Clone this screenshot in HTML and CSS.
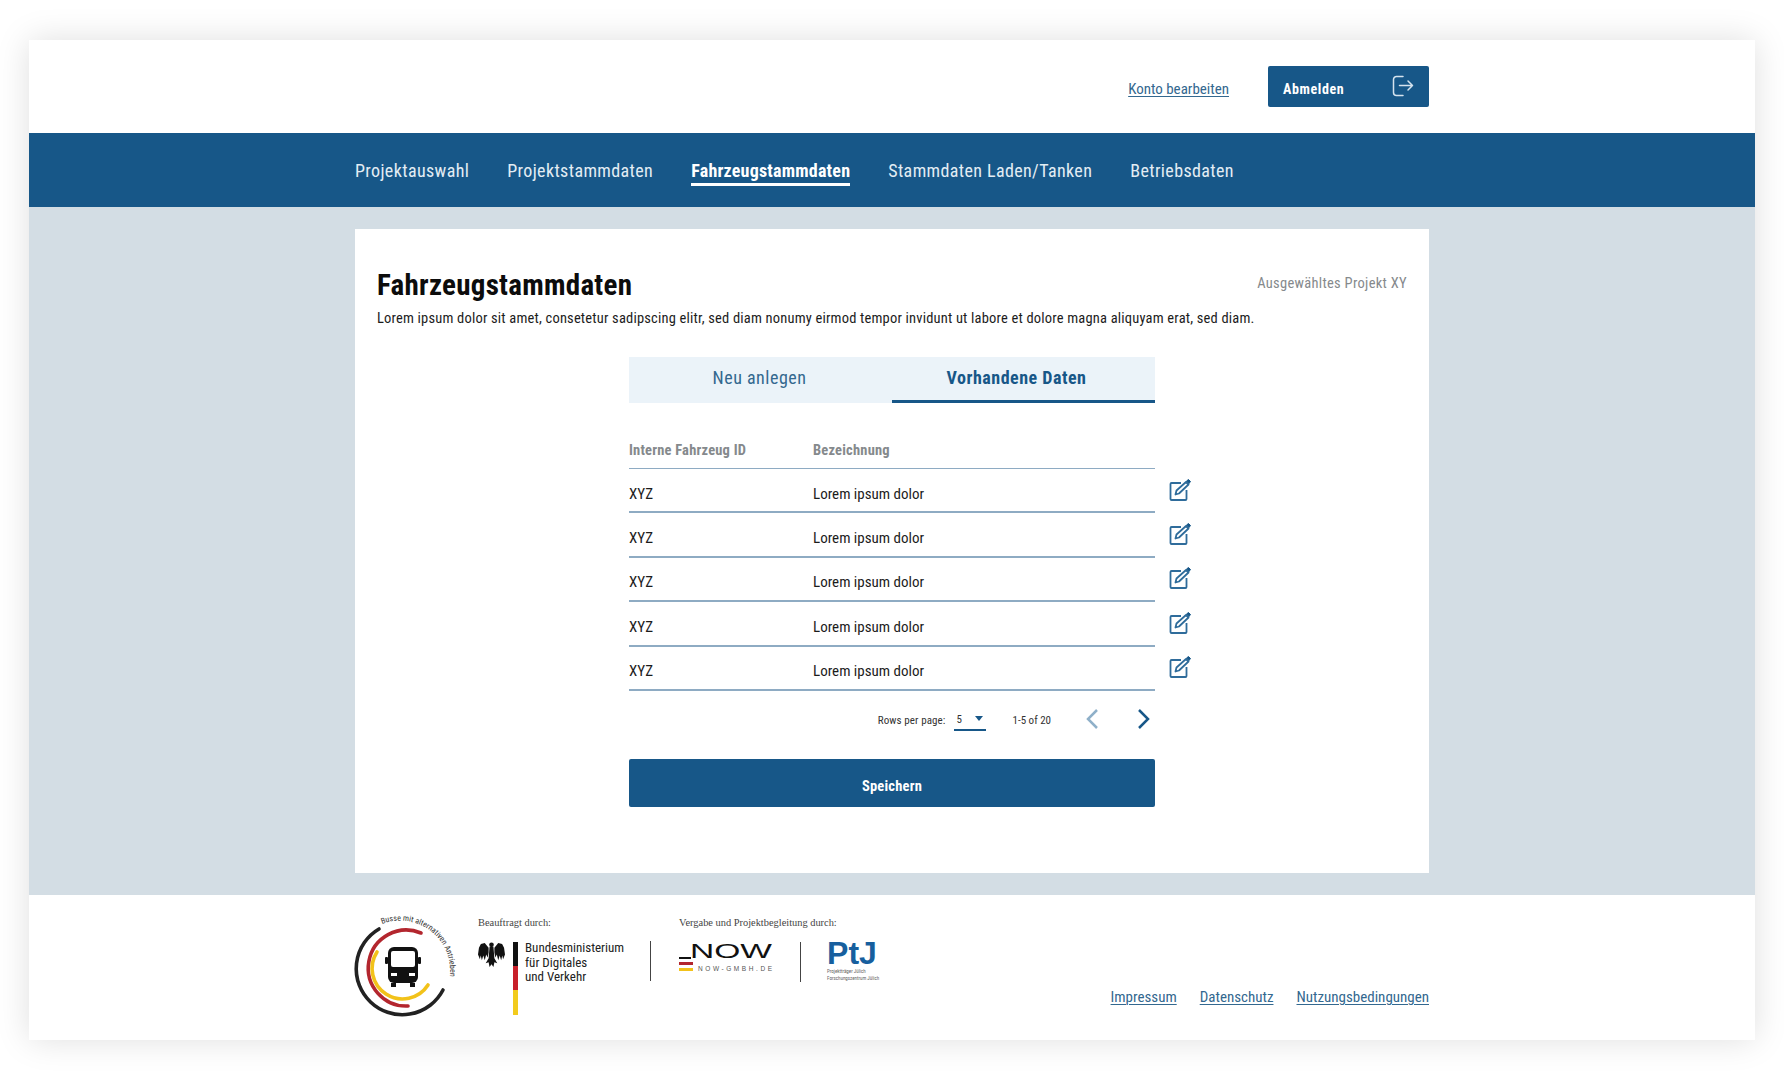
FILE: index.html
```html
<!DOCTYPE html>
<html lang="de">
<head>
    <meta charset="UTF-8">
    <meta name="viewport" content="width=device-width, initial-scale=1.0">
    <title>Fahrzeugstammdaten</title>
    <link rel="stylesheet" href="styles.css">
</head>
<body>
    <div class="frame">
        <header class="topbar">
            <div class="container topbar-inner">
                <a class="link account-link" href="#">Konto bearbeiten</a>
                <button class="logout-btn" type="button">
                    <span class="logout-text">Abmelden</span>
                    <svg class="logout-icon" viewBox="0 0 22 22" fill="none" stroke="#d5e3ee" stroke-width="1.5" stroke-linecap="round" stroke-linejoin="round">
                        <path d="M11 1.500H4.500a3 3 0 0 0-3 3v13a3 3 0 0 0 3 3H11"/>
                        <path d="M7.500 10.500h13M16 6l4.500 4.500L16 15"/>
                    </svg>
                </button>
            </div>
        </header>

        <nav class="mainnav">
            <div class="container mainnav-inner">
                <a class="nav-item" href="#">Projektauswahl</a>
                <a class="nav-item" href="#">Projektstammdaten</a>
                <a class="nav-item active" href="#">Fahrzeugstammdaten</a>
                <a class="nav-item" href="#">Stammdaten Laden/Tanken</a>
                <a class="nav-item" href="#">Betriebsdaten</a>
            </div>
        </nav>

        <main class="content">
            <div class="container card">
                <div class="card-head">
                    <h1>Fahrzeugstammdaten</h1>
                    <span class="selected-project">Ausgewähltes Projekt XY</span>
                </div>
                <p class="intro">Lorem ipsum dolor sit amet, consetetur sadipscing elitr, sed diam nonumy eirmod tempor invidunt ut labore et dolore magna aliquyam erat, sed diam.</p>

                <div class="panel">
                    <div class="tabs">
                        <a class="tab" href="#">Neu anlegen</a>
                        <a class="tab active" href="#">Vorhandene Daten</a>
                    </div>

                    <div class="table-head">
                        <span class="col-id">Interne Fahrzeug ID</span>
                        <span>Bezeichnung</span>
                    </div>

                    <div class="table-row">
                        <span class="col-id">XYZ</span>
                        <span class="col-name">Lorem ipsum dolor</span>
                        <svg class="edit-icon" viewBox="0 0 22 22" fill="none" stroke="#2f6c9b" stroke-width="1.8" stroke-linejoin="round"><path d="M12 4H2.500a1 1 0 0 0-1 1v15a1 1 0 0 0 1 1h14a1 1 0 0 0 1-1v-9"/><path d="M7.500 11.500 17 3l2.500 2.500-9.500 9-3.500 1z"/><path d="M17.500 2 19.500 .5l2 2-1.500 2z" fill="#175788" stroke="#175788" stroke-width="1"/></svg>
                    </div>
                    <div class="table-row">
                        <span class="col-id">XYZ</span>
                        <span class="col-name">Lorem ipsum dolor</span>
                        <svg class="edit-icon" viewBox="0 0 22 22" fill="none" stroke="#2f6c9b" stroke-width="1.8" stroke-linejoin="round"><path d="M12 4H2.500a1 1 0 0 0-1 1v15a1 1 0 0 0 1 1h14a1 1 0 0 0 1-1v-9"/><path d="M7.500 11.500 17 3l2.500 2.500-9.500 9-3.500 1z"/><path d="M17.500 2 19.500 .5l2 2-1.500 2z" fill="#175788" stroke="#175788" stroke-width="1"/></svg>
                    </div>
                    <div class="table-row">
                        <span class="col-id">XYZ</span>
                        <span class="col-name">Lorem ipsum dolor</span>
                        <svg class="edit-icon" viewBox="0 0 22 22" fill="none" stroke="#2f6c9b" stroke-width="1.8" stroke-linejoin="round"><path d="M12 4H2.500a1 1 0 0 0-1 1v15a1 1 0 0 0 1 1h14a1 1 0 0 0 1-1v-9"/><path d="M7.500 11.500 17 3l2.500 2.500-9.500 9-3.500 1z"/><path d="M17.500 2 19.500 .5l2 2-1.500 2z" fill="#175788" stroke="#175788" stroke-width="1"/></svg>
                    </div>
                    <div class="table-row">
                        <span class="col-id">XYZ</span>
                        <span class="col-name">Lorem ipsum dolor</span>
                        <svg class="edit-icon" viewBox="0 0 22 22" fill="none" stroke="#2f6c9b" stroke-width="1.8" stroke-linejoin="round"><path d="M12 4H2.500a1 1 0 0 0-1 1v15a1 1 0 0 0 1 1h14a1 1 0 0 0 1-1v-9"/><path d="M7.500 11.500 17 3l2.500 2.500-9.500 9-3.500 1z"/><path d="M17.500 2 19.500 .5l2 2-1.500 2z" fill="#175788" stroke="#175788" stroke-width="1"/></svg>
                    </div>
                    <div class="table-row">
                        <span class="col-id">XYZ</span>
                        <span class="col-name">Lorem ipsum dolor</span>
                        <svg class="edit-icon" viewBox="0 0 22 22" fill="none" stroke="#2f6c9b" stroke-width="1.8" stroke-linejoin="round"><path d="M12 4H2.500a1 1 0 0 0-1 1v15a1 1 0 0 0 1 1h14a1 1 0 0 0 1-1v-9"/><path d="M7.500 11.500 17 3l2.500 2.500-9.500 9-3.500 1z"/><path d="M17.500 2 19.500 .5l2 2-1.500 2z" fill="#175788" stroke="#175788" stroke-width="1"/></svg>
                    </div>

                    <div class="pagination">
                        <span class="rows-label">Rows per page:</span>
                        <span class="rows-select">5<i class="caret"></i></span>
                        <span class="range">1-5 of 20</span>
                        <svg class="chevron" viewBox="0 0 14 22" fill="none" stroke="#8fb0c9" stroke-width="2.500"><path d="M12 2 3 11l9 9"/></svg>
                        <svg class="chevron next" viewBox="0 0 14 22" fill="none" stroke="#175788" stroke-width="2.500"><path d="M2 2l9 9-9 9"/></svg>
                    </div>

                    <button class="save-btn" type="button">Speichern</button>
                </div>
            </div>
        </main>

        <footer class="footer">
            <div class="container footer-inner">
                <svg class="bus-logo" viewBox="0 0 110 110" fill="none">
                    <defs><path id="ringText" d="M36 14A50 50 0 0 1 101 78"/></defs>
                    <path d="M33 19A46 46 0 1 0 97 80" stroke="#222" stroke-width="3.600" stroke-linecap="round"/>
                    <path d="M75 23A38 38 0 1 0 62 96" stroke="#b3262e" stroke-width="3.600" stroke-linecap="round"/>
                    <path d="M31 42A30 30 0 1 0 82 75" stroke="#f2c21a" stroke-width="3.600" stroke-linecap="round"/>
                    <text class="ring-text"><textPath href="#ringText">Busse mit alternativen Antrieben</textPath></text>
                    <rect x="42" y="37" width="30" height="36" rx="6" fill="#111"/>
                    <rect x="39" y="47" width="3" height="7" rx="1" fill="#111"/>
                    <rect x="72" y="47" width="3" height="7" rx="1" fill="#111"/>
                    <rect x="45" y="41" width="24" height="16" rx="2" fill="#fff"/>
                    <rect x="45" y="63" width="6" height="3" fill="#fff"/>
                    <rect x="63" y="63" width="6" height="3" fill="#fff"/>
                    <rect x="45" y="73" width="5" height="4" fill="#111"/>
                    <rect x="64" y="73" width="5" height="4" fill="#111"/>
                </svg>

                <div class="partner">
                    <div class="partner-label">Beauftragt durch:</div>
                    <div class="partner-row">
                        <svg class="eagle" viewBox="0 0 28 28" fill="#111">
                            <circle cx="14" cy="4" r="2.400"/>
                            <path d="M12 6h4l1 12 3 5-3-1-1 5-2-3-2 3-1-5-3 1 3-5z"/>
                            <path d="M11 7 7 2 3 3 1 7l-1 7 2 5 .8-4 1.200 5 1.500-5 1.500 5 1.500-6 1.500 3 1-5z"/>
                            <path d="M17 7l4-5 4 1 2 4 1 7-2 5-.8-4-1.200 5-1.500-5-1.500 5-1.500-6-1.500 3-1-5z"/>
                        </svg>
                        <div class="flag-bar"></div>
                        <div class="ministry">Bundesministerium<br>für Digitales<br>und Verkehr</div>
                    </div>
                </div>

                <div class="divider first"></div>

                <div class="partner second">
                    <div class="partner-label">Vergabe und Projektbegleitung durch:</div>
                    <div class="partner-row">
                        <svg class="now-logo" viewBox="0 0 94 38" fill="none">
                            <path d="M0 20h12" stroke="#111" stroke-width="2"/>
                            <text class="now-word" x="11" y="20" textLength="82" lengthAdjust="spacingAndGlyphs">NOW</text>
                            <rect x="0" y="24" width="14" height="3" fill="#b3262e"/>
                            <rect x="0" y="30" width="14" height="3" fill="#f2c21a"/>
                            <text class="now-url" x="19" y="33" textLength="74">NOW-GMBH.DE</text>
                        </svg>
                        <div class="divider"></div>
                        <div class="ptj">
                            <div class="ptj-word">PtJ</div>
                            <div class="ptj-sub">Projektträger Jülich<br>Forschungszentrum Jülich</div>
                        </div>
                    </div>
                </div>

                <div class="footer-links">
                    <a class="link" href="#">Impressum</a>
                    <a class="link" href="#">Datenschutz</a>
                    <a class="link" href="#">Nutzungsbedingungen</a>
                </div>
            </div>
        </footer>
    </div>
</body>
</html>
```

FILE: styles.css
```css
* {
    margin: 0;
    padding: 0;
    box-sizing: border-box;
}

body {
    background: #fff;
    font-family: "Roboto Condensed", Roboto, sans-serif;
    color: #1c1c1c;
}

a {
    text-decoration: none;
    color: inherit;
}

.frame {
    margin: 40px 29px;
    height: 1000px;
    display: flex;
    flex-direction: column;
    box-shadow: 0 0 32px rgba(0, 0, 0, 0.13);
}

.container {
    width: 1074px;
    margin: 0 auto;
}

.link {
    color: #33688f;
    font-size: 15px;
    text-decoration: underline;
    text-underline-offset: 2px;
    text-decoration-thickness: 1px;
}

.topbar {
    height: 93px;
    background: #fff;
}

.topbar-inner {
    height: 100%;
    display: flex;
    align-items: center;
    justify-content: flex-end;
    gap: 39px;
    padding-top: 2px;
}

.account-link {
    margin-top: 2px;
}

.logout-btn {
    width: 161px;
    height: 41px;
    margin-top: -2px;
    padding: 0 15px;
    display: flex;
    align-items: center;
    justify-content: space-between;
    background: #175788;
    color: #fff;
    border: none;
    border-radius: 2px;
    font-family: inherit;
    font-size: 14px;
    font-weight: 700;
    letter-spacing: 0.6px;
}

.logout-text {
    padding-top: 4px;
}

.logout-icon {
    width: 22px;
    height: 22px;
    margin-top: -2px;
}

.mainnav {
    height: 74px;
    background: #175788;
}

.mainnav-inner {
    height: 100%;
    display: flex;
    align-items: center;
    gap: 38px;
}

.nav-item {
    color: #e3edf4;
    font-size: 18px;
    line-height: 25px;
    letter-spacing: 0.38px;
    padding-top: 3px;
    border-bottom: 3px solid transparent;
}

.nav-item.active {
    color: #fff;
    font-weight: 700;
    letter-spacing: 0.2px;
    border-bottom-color: #fff;
}

.content {
    flex: 1;
    background: #d3dde4;
    padding-top: 22px;
}

.card {
    height: 644px;
    background: #fff;
    padding: 36px 22px 0;
}

.card-head {
    display: flex;
    justify-content: space-between;
    align-items: flex-start;
}

h1 {
    font-size: 29px;
    line-height: 40px;
    font-weight: 700;
    letter-spacing: 0.27px;
    color: #0c0c0c;
}

.selected-project {
    color: #85898c;
    font-size: 14.500px;
    line-height: 38px;
    letter-spacing: 0.3px;
}

.intro {
    margin-top: 4px;
    font-size: 14.500px;
    line-height: 20px;
    letter-spacing: 0.185px;
}

.panel {
    width: 526px;
    margin: 28px auto 0;
}

.tabs {
    display: grid;
    grid-template-columns: 1fr 1fr;
    height: 46px;
    background: #ebf3f9;
}

.tab {
    display: flex;
    align-items: center;
    justify-content: center;
    padding: 0 2px 5px 0;
    color: #33688f;
    font-size: 18px;
    letter-spacing: 0.5px;
}

.tab.active {
    padding: 0 14px 3px 0;
    color: #175788;
    font-weight: 700;
    letter-spacing: 0.5px;
    border-bottom: 3px solid #175788;
}

.table-head,
.table-row {
    display: flex;
    align-items: center;
}

.table-head {
    height: 66px;
    padding-top: 30px;
    border-bottom: 1px solid #8eabc3;
    color: #85898c;
    font-size: 14.500px;
    font-weight: 700;
    letter-spacing: 0.2px;
}

.col-id {
    width: 184px;
}

.table-row {
    height: 44.400px;
    padding-top: 7px;
    border-bottom: 2px solid #8eabc3;
    font-size: 15px;
}

.col-name {
    flex: 1;
}

.edit-icon {
    width: 22px;
    height: 22px;
    margin: -8px -36px 0 0;
}

.pagination {
    height: 55.500px;
    padding-top: 3px;
    display: flex;
    align-items: center;
    justify-content: flex-end;
    font-size: 11px;
    color: #333;
}

.rows-label {
    letter-spacing: 0.1px;
}

.rows-select {
    width: 32px;
    height: 20px;
    margin: 2px 27px 0 8px;
    padding: 2px 3px 0;
    display: flex;
    justify-content: space-between;
    border-bottom: 2px solid #175788;
}

.caret {
    width: 0;
    height: 0;
    margin-top: 3px;
    border: 4.500px solid transparent;
    border-top: 5px solid #175788;
}

.chevron {
    width: 14px;
    height: 22px;
    margin: -2px 0 0 34px;
}

.chevron.next {
    margin-left: 38px;
    margin-right: 4px;
}

.save-btn {
    display: block;
    width: 100%;
    height: 48px;
    margin-top: 13px;
    padding-top: 7px;
    background: #175788;
    color: #fff;
    border: none;
    border-radius: 2px;
    font-family: inherit;
    font-size: 14.500px;
    font-weight: 700;
    letter-spacing: 0.2px;
}

.footer {
    height: 145px;
    background: #fff;
}

.footer-inner {
    height: 100%;
    display: flex;
}

.bus-logo {
    width: 110px;
    height: 110px;
    margin: 15px -1px 0 -9px;
    flex-shrink: 0;
    overflow: visible;
}

.ring-text {
    font-family: "Roboto Condensed", Roboto, sans-serif;
    font-size: 8px;
    fill: #333;
}

.partner {
    margin: 21px 0 0 23px;
}

.partner.second {
    margin-left: 28px;
}

.partner-label {
    font-family: "Liberation Serif", serif;
    font-size: 10.400px;
    line-height: 14px;
    color: #444;
}

.partner-row {
    display: flex;
    margin-top: 12px;
}

.eagle {
    width: 27px;
    height: 27px;
    margin-top: -1px;
}

.flag-bar {
    width: 5px;
    height: 73px;
    margin: 0 7px 0 8px;
    background: linear-gradient(#111 0 33%, #c8202a 33% 66%, #f2cb1d 66%);
}

.ministry {
    margin-top: -1px;
    font-size: 13px;
    line-height: 14.500px;
    color: #222;
}

.divider {
    width: 1px;
    height: 40px;
    background: #444;
}

.divider.first {
    margin: 46px 0 0 26px;
}

.now-logo {
    width: 94px;
    height: 38px;
    margin-top: -4px;
}

.now-word {
    font-family: "Liberation Sans", sans-serif;
    font-size: 21px;
    fill: #111;
}

.now-url {
    font-family: "Liberation Sans", sans-serif;
    font-size: 6.500px;
    fill: #555;
}

.partner.second .divider {
    margin: 0 26px 0 27px;
}

.ptj {
    margin-top: -4px;
    width: 58px;
    color: #175f9e;
}

.ptj-word {
    font-family: "Liberation Sans", sans-serif;
    font-size: 32px;
    line-height: 30px;
    font-weight: 700;
}

.ptj-sub {
    font-size: 5px;
    line-height: 7px;
    white-space: nowrap;
    color: #666;
}

.footer-links {
    margin-left: auto;
    align-self: flex-end;
    padding-bottom: 34px;
    display: flex;
    gap: 23px;
}
```
